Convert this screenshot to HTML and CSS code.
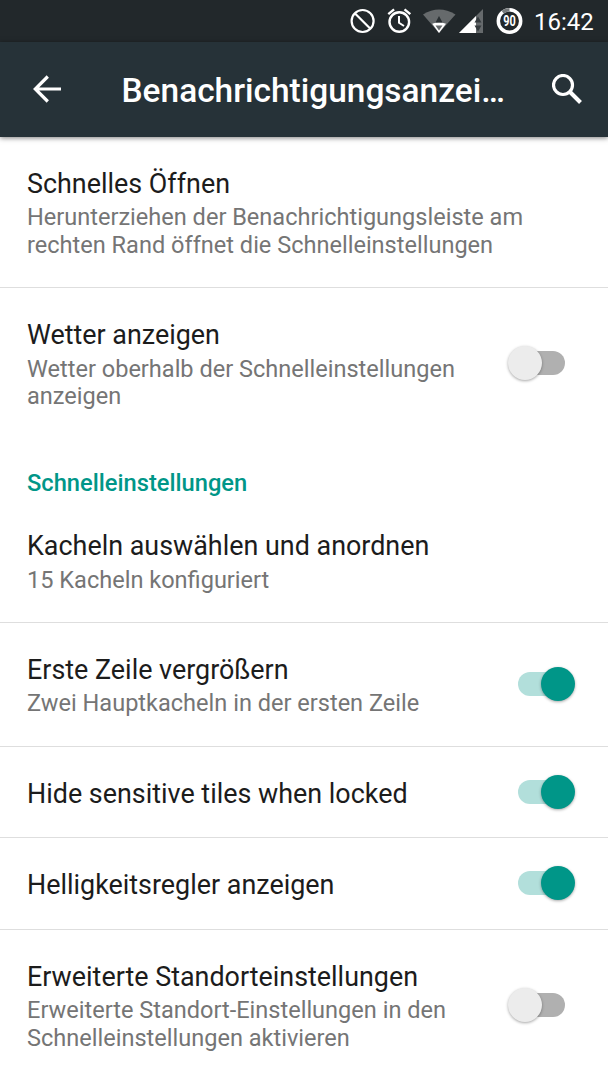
FILE: index.html
```
<!DOCTYPE html>
<html lang="de">
<head>
  <meta charset="UTF-8">
  <title>Benachrichtigungsanzeige</title>
  <link rel="stylesheet" href="styles.css">
</head>
<body>
  <div class="statusbar">
    <svg class="status-icons" width="186" height="42" viewBox="340 0 186 42">
      <!-- do not disturb -->
      <g fill="none" stroke="#fff" stroke-width="2.2">
        <circle cx="362.6" cy="21" r="11"/>
        <path d="M354.8 13.2l15.6 15.6"/>
      </g>
      <!-- alarm -->
      <g fill="none" stroke="#fff" stroke-width="2.4">
        <circle cx="399.3" cy="22" r="9.8"/>
        <path d="M388.3 14.2l5.8-4.8M410.3 14.2l-5.8-4.8"/>
        <path d="M399 16v6.8l5 3.2" stroke-width="2"/>
      </g>
      <!-- wifi -->
      <path d="M439 33L423 14.4Q439 4.6 455.5 14.4z" fill="#666a6c"/>
      <path d="M432.2 23.8Q439 21 446 23.8L439 33z" fill="#fff"/>
      <path d="M439 16l3.5 6.5h-7z" fill="#2a3033"/>
      <path d="M435.5 25.5h7l-3.500 5z" fill="#666a6c"/>
      <!-- mobile signal -->
      <path d="M459 33L483 9v24z" fill="#666a6c"/>
      <path d="M459 33l17-17v17z" fill="#fff"/>
      <path d="M474.5 22.5l3.5-6 3.5 6zM474.5 25.5h7l-3.500 6z" fill="#353b3e"/>
      <!-- battery -->
      <g fill="none" stroke-width="3.5">
        <circle cx="509.5" cy="21" r="11.2" stroke="#fff"/>
        <path d="M502.6 12.2A11.2 11.2 0 0 1 509.5 9.8" stroke="#777b7d"/>
      </g>
      <text x="509.5" y="26" class="battery" textLength="12.5" lengthAdjust="spacingAndGlyphs">90</text>
    </svg>
    <span class="clock">16:42</span>
  </div>

  <header class="toolbar">
    <svg class="back" width="28" height="28" viewBox="0 0 28 28">
      <path d="M28 14H2.5M14.8 1.5L2.3 14l12.5 12.5" fill="none" stroke="#fff" stroke-width="3.2"/>
    </svg>
    <h1>Benachrichtigungsanzei…</h1>
    <svg class="search" width="30" height="30" viewBox="0 0 30 30">
      <circle cx="11" cy="11" r="9.5" fill="none" stroke="#fff" stroke-width="3.2"/>
      <path d="M18 18l10.5 10.5" stroke="#fff" stroke-width="4"/>
    </svg>
  </header>

  <main>
    <div class="row">
      <div class="text">
        <div class="title">Schnelles Öffnen</div>
        <div class="summary">Herunterziehen der Benachrichtigungsleiste am<br>rechten Rand öffnet die Schnelleinstellungen</div>
      </div>
    </div>
    <div class="row last">
      <div class="text">
        <div class="title">Wetter anzeigen</div>
        <div class="summary">Wetter oberhalb der Schnelleinstellungen<br>anzeigen</div>
      </div>
      <div class="switch"></div>
    </div>

    <h2>Schnelleinstellungen</h2>

    <div class="row">
      <div class="text">
        <div class="title">Kacheln auswählen und anordnen</div>
        <div class="summary">15 Kacheln konfiguriert</div>
      </div>
    </div>
    <div class="row">
      <div class="text">
        <div class="title">Erste Zeile vergrößern</div>
        <div class="summary">Zwei Hauptkacheln in der ersten Zeile</div>
      </div>
      <div class="switch on"></div>
    </div>
    <div class="row">
      <div class="text">
        <div class="title">Hide sensitive tiles when locked</div>
      </div>
      <div class="switch on"></div>
    </div>
    <div class="row">
      <div class="text">
        <div class="title">Helligkeitsregler anzeigen</div>
      </div>
      <div class="switch on"></div>
    </div>
    <div class="row last">
      <div class="text">
        <div class="title">Erweiterte Standorteinstellungen</div>
        <div class="summary">Erweiterte Standort-Einstellungen in den<br>Schnelleinstellungen aktivieren</div>
      </div>
      <div class="switch"></div>
    </div>
  </main>
</body>
</html>
```
FILE: styles.css
```
* {
  box-sizing: border-box;
}

body {
  margin: 0;
  height: 1080px;
  overflow: hidden;
  background: #fff;
  color: #1c1c1c;
  font-family: Roboto, sans-serif;
}

.statusbar {
  display: flex;
  justify-content: flex-end;
  align-items: center;
  height: 42px;
  padding-right: 14px;
  background: #22282b;
  color: #fff;
}

.status-icons {
  margin-right: 8px;
}

.battery {
  fill: #fff;
  font-size: 14.5px;
  font-weight: 700;
  text-anchor: middle;
}

.clock {
  width: 60px;
  padding-top: 2px;
  font-size: 24px;
  line-height: 42px;
  white-space: nowrap;
}

.toolbar {
  display: flex;
  align-items: center;
  height: 94.6px;
  padding: 0 26px 0 33px;
  background: #263238;
  color: #fff;
  box-shadow: 0 1px 5px rgba(0, 0, 0, 0.5);
}

.toolbar h1 {
  margin: 4px 0 0 60.5px;
  font-size: 33.45px;
  font-weight: 500;
  line-height: 44px;
  white-space: nowrap;
}

.search {
  margin: -1px 0 0 auto;
}

.row {
  display: flex;
  align-items: center;
  padding: 0 32px 0 27px;
  border-bottom: 1px solid #dedede;
}

.row.last {
  border-bottom-color: transparent;
}

.text {
  flex: 1;
  padding: 31px 0 27.5px;
}

.title {
  font-size: 26.9px;
  line-height: 32px;
  white-space: nowrap;
}

.summary {
  margin-top: 4.5px;
  color: #757575;
  font-size: 23.55px;
  line-height: 27.7px;
  white-space: nowrap;
}

h2 {
  height: 59.7px;
  margin: 0;
  padding: 30px 27px 0;
  color: #009688;
  font-size: 23.7px;
  font-weight: 500;
  line-height: 28px;
}

.switch {
  position: relative;
  flex: none;
  width: 58px;
  height: 24px;
}

.switch::before {
  content: "";
  display: block;
  width: 47px;
  height: 24px;
  border-radius: 12px;
  background: #b0b0b0;
}

.switch::after {
  content: "";
  position: absolute;
  top: -5px;
  left: -10px;
  width: 34px;
  height: 34px;
  border-radius: 50%;
  background: #ececec;
  box-shadow: 0 1px 3px rgba(0, 0, 0, 0.35);
}

.switch.on::before {
  background: #b2dfdb;
}

.switch.on::after {
  left: 23px;
  background: #009688;
}
```
